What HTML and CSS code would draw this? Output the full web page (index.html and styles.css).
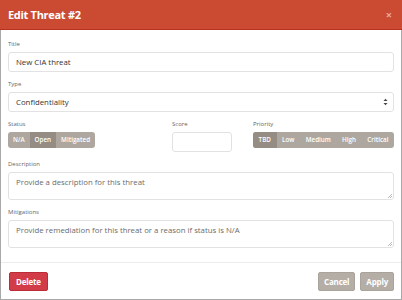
FILE: index.html
```html
<!DOCTYPE html>
<html lang="en">
<head>
    <meta charset="UTF-8">
    <meta name="viewport" content="width=device-width, initial-scale=1.0">
    <title>Edit Threat</title>
    <link rel="stylesheet" href="styles.css">
</head>
<body>
    <div class="modal">
        <div class="modal-header">
            <h5 class="modal-title">Edit Threat #2</h5>
            <span class="close">&times;</span>
        </div>

        <div class="modal-body">
            <div class="form-group">
                <label>Title</label>
                <div class="input">New CIA threat</div>
            </div>

            <div class="form-group">
                <label>Type</label>
                <div class="input select">
                    <span>Confidentiality</span>
                    <svg class="caret" width="5" height="8" viewBox="0 0 5 8">
                        <path d="M0.5 3 L2.5 0.8 L4.5 3 Z M0.5 5 L2.5 7.2 L4.5 5 Z" fill="#444"/>
                    </svg>
                </div>
            </div>

            <div class="form-row">
                <div class="form-group">
                    <label>Status</label>
                    <div class="btn-group">
                        <span class="btn">N/A</span>
                        <span class="btn active">Open</span>
                        <span class="btn">Mitigated</span>
                    </div>
                </div>
                <div class="form-group">
                    <label>Score</label>
                    <div class="input score"></div>
                </div>
                <div class="form-group">
                    <label>Priority</label>
                    <div class="btn-group full">
                        <span class="btn active">TBD</span>
                        <span class="btn">Low</span>
                        <span class="btn">Medium</span>
                        <span class="btn">High</span>
                        <span class="btn">Critical</span>
                    </div>
                </div>
            </div>

            <div class="form-group">
                <label>Description</label>
                <div class="input textarea placeholder">Provide a description for this threat</div>
            </div>

            <div class="form-group">
                <label>Mitigations</label>
                <div class="input textarea placeholder">Provide remediation for this threat or a reason if status is N/A</div>
            </div>
        </div>

        <div class="modal-footer">
            <span class="btn-action danger">Delete</span>
            <span class="spacer"></span>
            <span class="btn-action secondary">Cancel</span>
            <span class="btn-action secondary">Apply</span>
        </div>
    </div>
</body>
</html>
```

FILE: styles.css
```css
body {
    margin: 0;
    font-family: 'Open Sans', 'Noto Sans', sans-serif;
    color: #333;
    background-color: #fff;
}
.modal {
    width: 402px;
    height: 300px;
    box-sizing: border-box;
    border: 1px solid #a9a9a9;
    border-top: none;
    background-color: #fff;
    display: flex;
    flex-direction: column;
}
.modal-header {
    height: 29px;
    margin: 0 -1px;
    background-color: #cb4a32;
    border-bottom: 1px solid #b8301f;
    display: flex;
    align-items: center;
    justify-content: space-between;
    padding: 0 10px 0 8px;
}
.modal-title {
    margin: 0;
    color: #fff;
    font-size: 11px;
    font-weight: 700;
    letter-spacing: -0.3px;
}
.close {
    color: #eaa899;
    font-size: 11px;
    font-weight: 700;
    line-height: 1;
}
.modal-body {
    padding: 10px 7px 0 7px;
}
.form-group {
    margin-bottom: 8px;
}
label {
    display: block;
    font-size: 6px;
    line-height: 8px;
    margin-bottom: 4px;
    color: #666;
}
.input {
    height: 20px;
    box-sizing: border-box;
    border: 1px solid #e2e2e2;
    border-radius: 3px;
    font-size: 7.8px;
    line-height: 18px;
    padding: 0 7px;
    color: #333;
}
.select {
    display: flex;
    align-items: center;
    justify-content: space-between;
    padding-right: 5px;
}
.caret {
    display: block;
}
.form-row {
    display: grid;
    grid-template-columns: 164px 81px 1fr;
}
.score {
    width: 60px;
}
.btn-group {
    display: flex;
    width: fit-content;
    height: 16px;
    border-radius: 3px;
    overflow: hidden;
    background-color: #aea79f;
}
.btn-group.full {
    width: auto;
}
.btn {
    color: #fff;
    font-size: 6.3px;
    font-weight: 600;
    line-height: 16px;
    padding: 0 5px;
    flex: 0 0 auto;
}
.btn-group.full .btn {
    flex: 1 1 auto;
    text-align: center;
    padding: 0 2px;
}
.btn.active {
    background-color: #958c83;
}
.textarea {
    height: 28px;
    line-height: 10px;
    padding-top: 4px;
    position: relative;
}
.textarea::after {
    content: "";
    position: absolute;
    right: 1px;
    bottom: 1px;
    width: 4px;
    height: 4px;
    background: linear-gradient(135deg, transparent 45%, #bbb 45%, #bbb 55%, transparent 55%, transparent 75%, #bbb 75%, #bbb 85%, transparent 85%);
}
.placeholder {
    color: #6b6b6b;
}
.modal-footer {
    margin-top: auto;
    height: 36px;
    border-top: 1px solid #ececec;
    display: flex;
    align-items: center;
    gap: 5px;
    padding: 0 7px 0 8px;
}
.spacer {
    flex: 1;
}
.btn-action {
    font-size: 8px;
    font-weight: 700;
    color: #fff;
    border-radius: 2px;
    height: 17px;
    line-height: 17px;
    padding: 0 5px;
    letter-spacing: -0.2px;
}
.danger {
    background-color: #d23b48;
    border: 1px solid #b92c38;
    padding: 0 6px;
}
.secondary {
    background-color: #b4aea7;
    border: 1px solid #aaa39b;
}
```
